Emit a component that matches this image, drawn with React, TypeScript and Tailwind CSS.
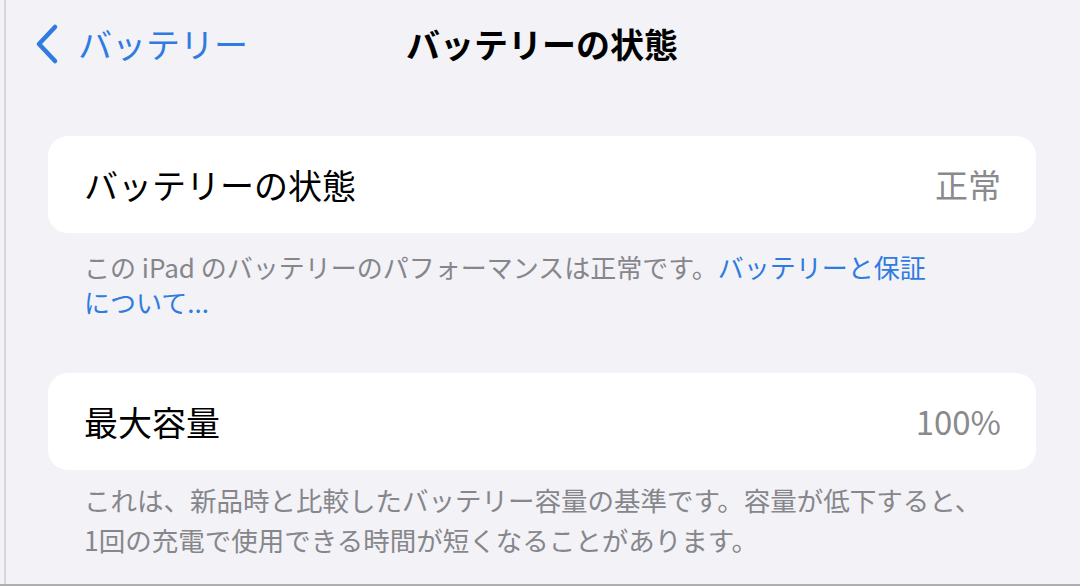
export default function App() {
  return (
    <div
      className="flex h-[586px] w-[1080px] overflow-hidden border-b-2 border-[#aeaeb2] bg-[#f2f2f7] text-black"
      style={{ fontFamily: '"Noto Sans CJK JP", "Noto Sans", sans-serif' }}
    >
      <div className="w-[4px] shrink-0" />
      <div className="w-[2px] shrink-0 bg-[#d6d6db]" />

      <div className="flex flex-1 flex-col pl-[42px] pr-[44px]">
        {/* Nav bar */}
        <div className="grid h-[88px] grid-cols-[1fr_auto_1fr] items-center">
          <div className="-ml-[16px] flex items-center gap-[18px] text-[#2f7be0]">
            <svg width="28" height="42" viewBox="0 0 28 42" fill="none">
              <path
                d="M23 4 L7 21 L23 38"
                stroke="currentColor"
                strokeWidth="4.5"
                strokeLinecap="round"
                strokeLinejoin="round"
              />
            </svg>
            <span className="text-[34px] leading-none">バッテリー</span>
          </div>
          <h1 className="text-[34px] font-bold leading-none">バッテリーの状態</h1>
          <div />
        </div>

        {/* Battery health */}
        <div className="mt-[48px] flex h-[97px] items-center justify-between rounded-[20px] bg-white pl-[36px] pr-[35px]">
          <span className="text-[34px]">バッテリーの状態</span>
          <span className="text-[33px] text-[#8a8a8e]">正常</span>
        </div>
        <p className="whitespace-nowrap pl-[36px] pt-[16px] text-[26px] leading-[35px] text-[#86868b]">
          この iPad のバッテリーのパフォーマンスは正常です。
          <span className="text-[#2f7be0]">バッテリーと保証</span>
          <br />
          <span className="text-[#2f7be0]">について...</span>
        </p>

        {/* Maximum capacity */}
        <div className="mt-[54px] flex h-[97px] items-center justify-between rounded-[20px] bg-white pl-[36px] pr-[35px]">
          <span className="text-[34px]">最大容量</span>
          <span className="text-[33px] text-[#8a8a8e]">100%</span>
        </div>
        <p className="whitespace-nowrap pl-[36px] pt-[10px] text-[26.5px] leading-[40px] text-[#86868b]">
          これは、新品時と比較したバッテリー容量の基準です。容量が低下すると、
          <br />
          1回の充電で使用できる時間が短くなることがあります。
        </p>
      </div>
    </div>
  );
}
